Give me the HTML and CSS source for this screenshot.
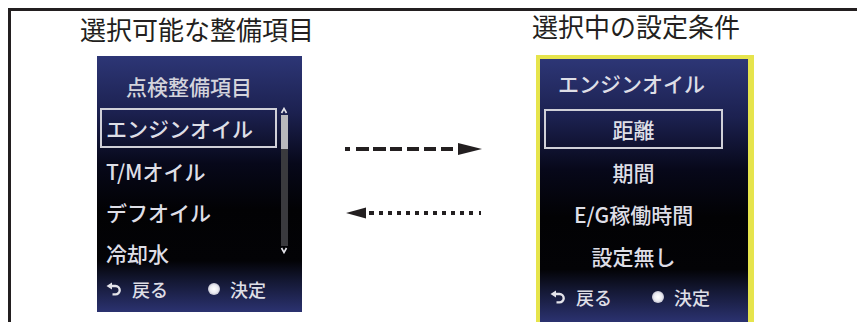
FILE: index.html
```html
<!DOCTYPE html>
<html lang="ja">
<head>
    <meta charset="UTF-8">
    <meta name="viewport" content="width=device-width, initial-scale=1.0">
    <title>整備項目の選択</title>
    <link rel="stylesheet" href="styles.css">
</head>
<body>
    <div class="frame">
        <!-- 選択可能な整備項目 -->
        <section class="side side-left">
            <h2 class="caption">選択可能な整備項目</h2>
            <div class="screen screen-list">
                <div class="screen-head">点検整備項目</div>
                <div class="screen-body">
                    <ul class="menu">
                        <li class="menu-item is-active">エンジンオイル</li>
                        <li class="menu-item">T/Mオイル</li>
                        <li class="menu-item">デフオイル</li>
                        <li class="menu-item">冷却水</li>
                    </ul>
                    <div class="scroll">
                        <svg class="caret" width="8" height="7" viewBox="0 0 8 7"><path d="M1.5 6 L4 1.5 L6.5 6" fill="none" stroke="#e4e4ea" stroke-width="1.6"/></svg>
                        <div class="track"><div class="thumb"></div></div>
                        <svg class="caret" width="8" height="7" viewBox="0 0 8 7"><path d="M1.5 1 L4 5.5 L6.5 1" fill="none" stroke="#e4e4ea" stroke-width="1.6"/></svg>
                    </div>
                </div>
                <div class="screen-foot">
                    <span class="foot-key">
                        <svg class="back-icon" width="16" height="14" viewBox="0 0 16 14"><path d="M0.5 4 L6 0.5 L6 7.5 Z" fill="#e4e4ea"/><path d="M5 4 H9.5 A4.2 4.2 0 0 1 9.5 12.4 H6.5" fill="none" stroke="#e4e4ea" stroke-width="2.4"/></svg>
                        戻る
                    </span>
                    <span class="foot-key">
                        <span class="dot"></span>
                        決定
                    </span>
                </div>
            </div>
        </section>

        <!-- 矢印 -->
        <div class="arrows">
            <svg width="138" height="14" viewBox="0 0 138 14">
                <rect x="0" y="5" width="5" height="4" fill="#231f20"/>
                <rect x="11" y="5" width="13" height="4" fill="#231f20"/>
                <rect x="28" y="5" width="13" height="4" fill="#231f20"/>
                <rect x="45" y="5" width="12" height="4" fill="#231f20"/>
                <rect x="62" y="5" width="12" height="4" fill="#231f20"/>
                <rect x="79" y="5" width="12" height="4" fill="#231f20"/>
                <rect x="96" y="5" width="12" height="4" fill="#231f20"/>
                <path d="M113 1 L137 7 L113 13 Z" fill="#231f20"/>
            </svg>
            <svg width="138" height="14" viewBox="0 0 138 14">
                <path d="M1 7 L21 1.5 L21 12.5 Z" fill="#231f20"/>
                <rect x="24" y="5" width="5" height="4" fill="#231f20"/>
                <rect x="34" y="5" width="4" height="4" fill="#231f20"/>
                <rect x="43" y="5" width="4" height="4" fill="#231f20"/>
                <rect x="52" y="5" width="4" height="4" fill="#231f20"/>
                <rect x="61" y="5" width="4" height="4" fill="#231f20"/>
                <rect x="70" y="5" width="4" height="4" fill="#231f20"/>
                <rect x="79" y="5" width="4" height="4" fill="#231f20"/>
                <rect x="88" y="5" width="4" height="4" fill="#231f20"/>
                <rect x="97" y="5" width="4" height="4" fill="#231f20"/>
                <rect x="106" y="5" width="4" height="4" fill="#231f20"/>
                <rect x="115" y="5" width="4" height="4" fill="#231f20"/>
                <rect x="124" y="5" width="4" height="4" fill="#231f20"/>
                <rect x="134" y="5" width="2" height="4" fill="#231f20"/>
            </svg>
        </div>

        <!-- 選択中の設定条件 -->
        <section class="side side-right">
            <h2 class="caption">選択中の設定条件</h2>
            <div class="screen screen-detail">
                <div class="screen-head">エンジンオイル</div>
                <ul class="menu menu-center">
                    <li class="menu-item is-active">距離</li>
                    <li class="menu-item">期間</li>
                    <li class="menu-item">E/G稼働時間</li>
                    <li class="menu-item">設定無し</li>
                </ul>
                <div class="screen-foot">
                    <span class="foot-key">
                        <svg class="back-icon" width="16" height="14" viewBox="0 0 16 14"><path d="M0.5 4 L6 0.5 L6 7.5 Z" fill="#e4e4ea"/><path d="M5 4 H9.5 A4.2 4.2 0 0 1 9.5 12.4 H6.5" fill="none" stroke="#e4e4ea" stroke-width="2.4"/></svg>
                        戻る
                    </span>
                    <span class="foot-key">
                        <span class="dot"></span>
                        決定
                    </span>
                </div>
            </div>
        </section>
    </div>
</body>
</html>
```

FILE: styles.css
```css
body {
    margin: 8px 0 0 8px;
    background: #ffffff;
    font-family: "Noto Sans CJK JP", "Noto Sans", sans-serif;
    color: #231f20;
    overflow: hidden;
}

.frame {
    box-sizing: border-box;
    display: flex;
    align-items: flex-start;
    height: calc(100vh - 8px);
    overflow: hidden;
    border-top: 3px solid #231f20;
    border-left: 3px solid #231f20;
}

.side {
    display: flex;
    flex-direction: column;
    align-items: flex-start;
}

.side-left {
    margin-left: 69px;
    padding-top: 5px;
}

.side-right {
    margin-left: 49px;
    padding-top: 2px;
}

.caption {
    margin: 0;
    font-size: 26px;
    line-height: 26px;
    font-weight: 400;
    white-space: nowrap;
}

/* 画面パネル */
.screen {
    box-sizing: border-box;
    color: #dedee6;
    font-weight: 500;
    background: linear-gradient(to bottom,
        #2d3676 0%,
        #1c2150 22%,
        #07081a 42%,
        #020204 60%,
        #030306 80%,
        #141834 88%,
        #2b3270 100%);
}

.screen-list {
    margin-top: 14px;
    margin-left: 17px;
    width: 205px;
    height: 256px;
}

.screen-detail {
    margin-top: 16px;
    margin-left: 4px;
    width: 218px;
    height: 267px;
    border-top: 4px solid #e6e44c;
    border-left: 4px solid #e6e44c;
    border-right: 6px solid #e6e44c;
}

.screen-head {
    font-size: 21px;
    line-height: 20px;
    white-space: nowrap;
}

.screen-list .screen-head {
    padding-top: 20px;
    padding-left: 29px;
    color: #d4d4dc;
}

.screen-detail .screen-head {
    padding-top: 14px;
    padding-left: 18px;
}

.screen-body {
    display: flex;
    margin-top: 12px;
}

.menu {
    list-style: none;
    margin: 0;
    padding: 0;
}

.screen-list .menu {
    margin-left: 3px;
    width: 177px;
}

.menu-item {
    box-sizing: border-box;
    height: 41px;
    line-height: 41px;
    font-size: 21px;
    padding-left: 6px;
    white-space: nowrap;
}

.menu-item.is-active {
    height: 40px;
    line-height: 36px;
    margin-bottom: 3px;
    border: 2px solid #d0d0d8;
    padding-left: 4px;
}

.menu-center {
    margin: 16px 0 0 4px;
    width: 179px;
    text-align: center;
}

.menu-center .menu-item {
    height: 42px;
    line-height: 42px;
    padding-left: 0;
}

.menu-center .menu-item.is-active {
    height: 40px;
    line-height: 36px;
    margin-bottom: 2px;
    padding-left: 0;
}

/* スクロールバー */
.scroll {
    display: flex;
    flex-direction: column;
    align-items: center;
    margin-left: 3px;
    margin-top: -1px;
}

.caret {
    display: block;
}

.track {
    width: 7px;
    height: 131px;
    margin: 1px 0;
    background: #3a3a3e;
}

.thumb {
    height: 34px;
    background: #b8b8bc;
}

/* フッター */
.screen-foot {
    display: flex;
    align-items: center;
    font-size: 18px;
    white-space: nowrap;
}

.screen-list .screen-foot {
    margin-top: -1px;
    height: 32px;
    padding-left: 9px;
    gap: 40px;
}

.screen-detail .screen-foot {
    height: 40px;
    padding-left: 10px;
    gap: 40px;
}

.foot-key {
    display: flex;
    align-items: center;
    gap: 10px;
}

.back-icon {
    display: block;
}

.dot {
    width: 12px;
    height: 12px;
    border-radius: 50%;
    background: radial-gradient(circle, #ffffff 0%, #ececf2 45%, #9a9ab0 100%);
}

/* 矢印 */
.arrows {
    display: flex;
    flex-direction: column;
    gap: 50px;
    margin-left: 31px;
    padding-top: 131px;
}

.arrows svg {
    display: block;
}
```
